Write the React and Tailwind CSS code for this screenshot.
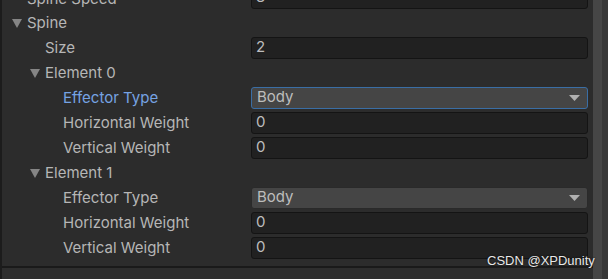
const font = { fontFamily: 'Inter, "Noto Sans", sans-serif' };

const rows = [
  { label: 'Spine', indent: 27, arrow: 12 },
  { label: 'Size', indent: 45, field: 'text', value: '2' },
  { label: 'Element 0', indent: 45, arrow: 30 },
  { label: 'Effector Type', indent: 63, field: 'select', value: 'Body', focused: true },
  { label: 'Horizontal Weight', indent: 63, field: 'text', value: '0' },
  { label: 'Vertical Weight', indent: 63, field: 'text', value: '0' },
  { label: 'Element 1', indent: 45, arrow: 30 },
  { label: 'Effector Type', indent: 63, field: 'select', value: 'Body' },
  { label: 'Horizontal Weight', indent: 63, field: 'text', value: '0' },
  { label: 'Vertical Weight', indent: 63, field: 'text', value: '0' },
];

const Arrow = () => (
  <svg width="10" height="9" viewBox="0 0 10 9" className="shrink-0">
    <polygon points="0,0 10,0 5,9" fill="#858585" />
  </svg>
);

const Field = ({ row }) => {
  if (row.field === 'select') {
    return (
      <div
        className={`h-[22px] w-full rounded-[3px] border flex items-center justify-between pl-[5px] pr-[7px] bg-[#454545] ${
          row.focused ? 'border-[#3a6ea5]' : 'border-[#2a2a2a]'
        }`}
      >
        <span className="text-[15px] text-[#bdbdbd]">{row.value}</span>
        <svg width="11" height="6" viewBox="0 0 11 6">
          <polygon points="0,0 11,0 5.5,6" fill="#b0b0b0" />
        </svg>
      </div>
    );
  }
  return (
    <div className="h-[22px] w-full rounded-[3px] border border-[#141414] bg-[#212121] flex items-center pl-[4px]">
      <span className="text-[15px] text-[#bdbdbd]">{row.value}</span>
    </div>
  );
};

const Row = ({ row }) => (
  <div className="h-[25px] flex items-center">
    <div className="w-[249px] shrink-0 relative h-full flex items-center">
      {row.arrow !== undefined && (
        <div className="absolute top-[8px]" style={{ left: row.arrow - 2 }}>
          <Arrow />
        </div>
      )}
      <span
        className={`text-[15px] whitespace-nowrap ${row.focused ? 'text-[#76a3e3]' : 'text-[#b6b6b6]'}`}
        style={{ marginLeft: row.indent - 2 }}
      >
        {row.label}
      </span>
    </div>
    <div className="flex-1 pr-[5px] mt-[-2px]">{row.field && <Field row={row} />}</div>
  </div>
);

export default function App() {
  return (
    <div className="w-[608px] h-[279px] bg-[#2c2c2c] flex overflow-hidden relative" style={font}>
      <div className="w-[2px] bg-[#1c1c1c] shrink-0" />
      <div className="flex-1 flex flex-col">
        <div className="mt-[-14px]">
          <div className="h-[25px] flex items-center">
            <div className="w-[249px] shrink-0">
              <span className="text-[15px] text-[#b6b6b6] ml-[25px]">Spine Speed</span>
            </div>
            <div className="flex-1 pr-[5px] mt-[-2px]">
              <div className="h-[22px] w-full rounded-[3px] border border-[#141414] bg-[#212121] flex items-center pl-[4px]">
                <span className="text-[15px] text-[#bdbdbd]">3</span>
              </div>
            </div>
          </div>
          {rows.map((row, i) => (
            <Row key={i} row={row} />
          ))}
        </div>
        <div className="mt-[5px] h-[2px] bg-[#1a1a1a]" />
        <div className="flex-1 bg-[#2e2e2e]" />
      </div>
      <div className="w-[9px] bg-[#464646] shrink-0" />
      <div className="w-[6px] bg-[#383838] shrink-0" />
      <div
        className="absolute left-[487px] top-[251px] text-[13px] text-[#e8e8e8]"
        style={{ fontFamily: '"Liberation Sans", Arial, sans-serif', textShadow: '0 0 2px #000' }}
      >
        CSDN @XPDunity
      </div>
    </div>
  );
}
